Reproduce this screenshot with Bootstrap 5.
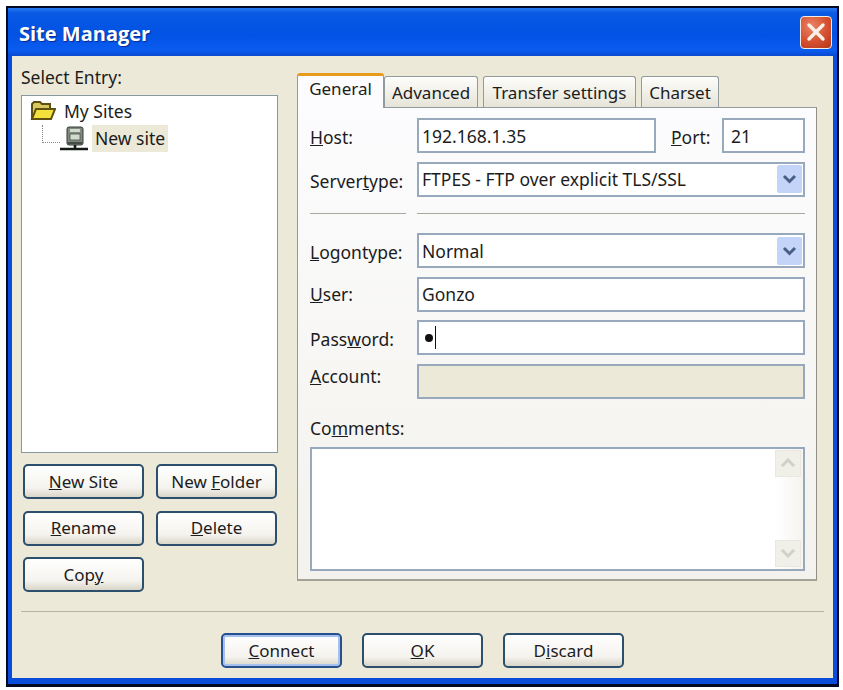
<!DOCTYPE html>
<html lang="en">
<head>
<meta charset="UTF-8">
<meta name="viewport" content="width=device-width, initial-scale=1.0">
<title>Site Manager</title>
<link href="https://cdn.jsdelivr.net/npm/bootstrap@5.3.2/dist/css/bootstrap.min.css" rel="stylesheet">
<style>
html, body { height: 690px; background: #fff; overflow: hidden; }
body { padding: 6px 4px 3px 6px; font-family: "Noto Sans", "Liberation Sans", sans-serif; font-size: 17.5px; color: #1c1c1c; }
.xp-window { height: 681px; background: #0a4ddb; border: 2px solid #050a24; border-bottom-width: 3px; display: flex; flex-direction: column; }
.xp-title { height: 48px; flex: none; padding: 0 5px 0 11px; background: linear-gradient(#2a7af0 0, #0a5ae6 10%, #0252e4 55%, #0a5cf0 88%, #0a49cf 100%); }
.xp-title-text { font-family: "Open Sans", "DejaVu Sans", sans-serif; font-weight: 700; font-size: 20px; color: #fff; text-shadow: 1px 1px 1px #0a2a90; padding-top: 4px; }
.xp-close { width: 32px; height: 33px; padding: 0; border: 1px solid #f2ece8; border-radius: 4px; background: radial-gradient(circle at 35% 30%, #ea8466, #d4502f 55%, #b5361a); }
.xp-client { flex: 1; margin: 0 4px 6px 4px; background: #ece9d8; padding: 0 9px 0 9px; }
.side-col { width: 257px; flex: none; padding-top: 9px; }
.entry-label { height: 24px; line-height: 24px; margin-bottom: 6px; }
.site-tree { height: 358px; background: #fff; border: 1px solid #87989f; padding: 3px 0 0 8px; line-height: 24px; }
.tree-line { height: 24px; }
.tree-second { margin-left: 12px; margin-top: 2px; height: 27px; }
.tree-dots { width: 18px; height: 18px; margin-top: -9px; border-left: 1px dotted #8a8a8a; border-bottom: 1px dotted #8a8a8a; flex: none; }
.tree-selected { background: #ece9d8; padding: 0 3px; line-height: 27px; margin-left: 4px; white-space: nowrap; }
.xp-btn { width: 121px; height: 35px; padding: 0; color: #1c1c1c; font-size: 17px; line-height: 30px; border: 2px solid #2d4f6e; border-radius: 5px; background: linear-gradient(#ffffff, #f4f3ee 70%, #d9d5c8); }
.xp-btn:hover { color: #1c1c1c; border-color: #2d4f6e; background: #fff; }
.xp-btn-default { box-shadow: inset 0 0 0 2px #a6c1ee; border-color: #27508f; }
.side-btns { margin-top: 11px; gap: 11.5px 12px; padding-left: 2px; }
.tab-col { width: 520px; flex: none; margin-left: 19px; padding-top: 17px; }
.nav-tabs.xp-tabs { height: 34px; border-bottom: 0; gap: 5px; flex-wrap: nowrap; position: relative; z-index: 1; }
.xp-tabs .nav-link { height: 31px; margin-top: 3px; padding: 0; text-align: center; line-height: 31px; color: #1c1c1c; background: linear-gradient(#fdfdfb, #e6e4d8); border: 1px solid #919b9c; border-bottom: 0; border-radius: 3px 3px 0 0; font-size: 17px; white-space: nowrap; }
.xp-tabs .nav-link.active { height: 35px; margin-top: 0; line-height: 25px; background: #fcfcfe; color: #1c1c1c; border-color: #919b9c; border-top: 3px solid #e89a1c; border-bottom: 0; }
.xp-tabs .tab-general { width: 87px; margin-right: -5px; }
.xp-tabs .tab-advanced { width: 94px; }
.xp-tabs .tab-transfer { width: 153px; }
.xp-tabs .tab-charset { width: 78px; }
.tab-panel { height: 474px; border: 1px solid #919b9c; border-right-color: #8f8f86; border-bottom: 2px solid #a3a294; background: linear-gradient(#fcfcfe, #f3f2ec); padding: 10px 11px 0 12px; }
.field-row { height: 35px; margin-bottom: 8.5px; }
.field-label { width: 107px; flex: none; line-height: 35px; padding-top: 2px; margin: 0; white-space: nowrap; }
.field-label-up { line-height: 25px; padding-top: 0; }
.field-label-mid { padding-top: 0; }
.xp-input.form-control, .xp-input.form-select { height: 35px; min-height: 0; padding: 0 3px; color: #1c1c1c; font-size: 17.5px; border: 2px solid #98a9bd; border-radius: 0; background-color: #fff; box-shadow: none; line-height: 30px; }
.xp-input.form-select { background-image: url("data:image/svg+xml,%3csvg xmlns='http://www.w3.org/2000/svg' viewBox='0 0 25 28'%3e%3crect width='25' height='28' rx='2' fill='%23c3d4f8'/%3e%3cpath d='M7 11l5.5 5.5L18 11' fill='none' stroke='%234a5f86' stroke-width='3'/%3e%3c/svg%3e"); background-position: right 1px center; background-size: 25px 28px; }
.host-input { width: 239px; }
.port-label { width: 66px; flex: none; padding-left: 15px; line-height: 35px; padding-top: 2px; margin: 0; }
.port-input { width: 83px; padding-left: 7px !important; }
.input-disabled { background-color: #ece9d8 !important; }
.fake-input { display: flex; align-items: center; }
.pw-dot { width: 8px; height: 8px; border-radius: 50%; background: #111; margin-left: 3px; }
.pw-caret { width: 1px; height: 23px; background: #111; margin-left: 2px; }
.rule-row { margin-top: 16.5px; margin-bottom: 19px; gap: 11px; }
.rule-left { width: 96px; height: 1px; background: #a9a89c; }
.rule-right { flex: 1; height: 1px; background: #a9a89c; }
.comments-label { line-height: 24px; margin-top: 17px; margin-bottom: 7px; }
.comments-box { height: 124px; border: 2px solid #98a9bd; background: #fff; }
.comments-box textarea { resize: none; border: 0; outline: 0; overflow: hidden; background: #fff; }
.xp-scroll { width: 28px; flex: none; padding: 1px 2px 2px 0; background: linear-gradient(90deg, #fff, #f5f4ee); }
.scroll-btn { height: 27px; border: 1px solid #e9e7df; background: #f0efe8; }
.bottom-rule { height: 1px; background: #b7b4a2; margin-top: 19px; margin-right: -1px; }
.foot-btns { gap: 20px; margin-top: 21px; padding-left: 200px; }
</style>
</head>
<body>
<div class="xp-window">
    <div class="xp-title d-flex align-items-center justify-content-between">
        <span class="xp-title-text">Site Manager</span>
        <button type="button" class="xp-close d-flex align-items-center justify-content-center" aria-label="Close">
            <svg width="22" height="22" viewBox="0 0 22 22"><path d="M4 4l14 14M18 4L4 18" stroke="#f8efe8" stroke-width="3.4" stroke-linecap="round"/></svg>
        </button>
    </div>

    <div class="xp-client d-flex flex-wrap align-content-start">
        <!-- Left side: tree and buttons -->
        <div class="side-col">
            <div class="entry-label">Select Entry:</div>
            <div class="site-tree">
                <div class="tree-line d-flex align-items-center gap-2">
                    <svg width="26" height="20" viewBox="0 0 26 20">
                        <path d="M2 18V3l2-2h6l2 2h8v5" fill="#d8c860" stroke="#5e5010" stroke-width="2"/>
                        <path d="M2 18l4-10h19l-4 10z" fill="#f4e23c" stroke="#5e5010" stroke-width="2"/>
                    </svg>
                    <span>My Sites</span>
                </div>
                <div class="tree-second d-flex align-items-center">
                    <div class="tree-dots"></div>
                    <svg width="28" height="26" viewBox="0 0 28 26">
                        <rect x="7" y="1" width="16" height="18" rx="2" fill="#7f8a7e" stroke="#343a34"/>
                        <rect x="10" y="3" width="10" height="3" fill="#d3dacd"/>
                        <rect x="10" y="8" width="10" height="6" fill="#d3dacd" stroke="#4c544c" stroke-width=".8"/>
                        <rect x="8" y="16" width="14" height="2" fill="#454c45"/>
                        <path d="M15 19v3M0 23h28" stroke="#141a14" stroke-width="2.6"/>
                    </svg>
                    <span class="tree-selected">New site</span>
                </div>
            </div>
            <div class="side-btns d-flex flex-wrap">
                <button type="button" class="btn xp-btn"><u>N</u>ew Site</button>
                <button type="button" class="btn xp-btn">New <u>F</u>older</button>
                <button type="button" class="btn xp-btn"><u>R</u>ename</button>
                <button type="button" class="btn xp-btn"><u>D</u>elete</button>
                <button type="button" class="btn xp-btn">Cop<u>y</u></button>
            </div>
        </div>

        <!-- Right side: tabs -->
        <div class="tab-col">
            <ul class="nav nav-tabs xp-tabs">
                <li class="nav-item"><a class="nav-link active tab-general" href="#">General</a></li>
                <li class="nav-item"><a class="nav-link tab-advanced" href="#">Advanced</a></li>
                <li class="nav-item"><a class="nav-link tab-transfer" href="#">Transfer settings</a></li>
                <li class="nav-item"><a class="nav-link tab-charset" href="#">Charset</a></li>
            </ul>
            <div class="tab-panel">
                <div class="field-row d-flex">
                    <label class="field-label"><u>H</u>ost:</label>
                    <input type="text" class="form-control xp-input host-input" value="192.168.1.35">
                    <label class="port-label"><u>P</u>ort:</label>
                    <input type="text" class="form-control xp-input port-input" value="21">
                </div>
                <div class="field-row d-flex">
                    <label class="field-label">Server<u>t</u>ype:</label>
                    <select class="form-select xp-input"><option>FTPES - FTP over explicit TLS/SSL</option></select>
                </div>
                <div class="rule-row d-flex">
                    <div class="rule-left"></div>
                    <div class="rule-right"></div>
                </div>
                <div class="field-row d-flex">
                    <label class="field-label"><u>L</u>ogontype:</label>
                    <select class="form-select xp-input"><option>Normal</option></select>
                </div>
                <div class="field-row d-flex">
                    <label class="field-label field-label-mid"><u>U</u>ser:</label>
                    <input type="text" class="form-control xp-input" value="Gonzo">
                </div>
                <div class="field-row d-flex">
                    <label class="field-label">Pass<u>w</u>ord:</label>
                    <div class="form-control xp-input fake-input"><span class="pw-dot"></span><span class="pw-caret"></span></div>
                </div>
                <div class="field-row d-flex">
                    <label class="field-label field-label-up"><u>A</u>ccount:</label>
                    <input type="text" class="form-control xp-input input-disabled" disabled>
                </div>
                <div class="comments-label">Co<u>m</u>ments:</div>
                <div class="comments-box d-flex">
                    <textarea class="flex-grow-1"></textarea>
                    <div class="xp-scroll d-flex flex-column justify-content-between">
                        <div class="scroll-btn d-flex align-items-center justify-content-center">
                            <svg width="16" height="10" viewBox="0 0 16 10"><path d="M2 8l6-6 6 6" fill="none" stroke="#d3d1c5" stroke-width="3"/></svg>
                        </div>
                        <div class="scroll-btn d-flex align-items-center justify-content-center">
                            <svg width="16" height="10" viewBox="0 0 16 10"><path d="M2 2l6 6 6-6" fill="none" stroke="#d3d1c5" stroke-width="3"/></svg>
                        </div>
                    </div>
                </div>
            </div>
        </div>

        <div class="w-100 bottom-rule"></div>
        <div class="w-100 foot-btns d-flex">
            <button type="button" class="btn xp-btn xp-btn-default"><u>C</u>onnect</button>
            <button type="button" class="btn xp-btn"><u>O</u>K</button>
            <button type="button" class="btn xp-btn">D<u>i</u>scard</button>
        </div>
    </div>
</div>
<script src="https://cdn.jsdelivr.net/npm/bootstrap@5.3.2/dist/js/bootstrap.bundle.min.js"></script>
</body>
</html>
